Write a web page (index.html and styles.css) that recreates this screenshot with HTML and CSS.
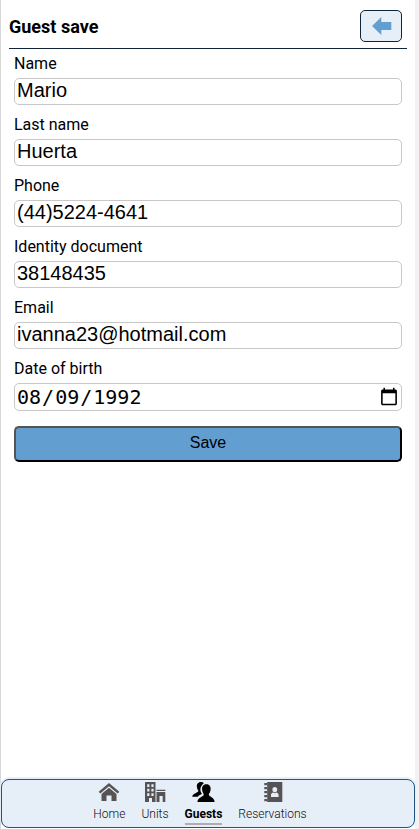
FILE: index.html
```html
<!DOCTYPE html>
<html lang="en">
<head>
<meta charset="utf-8">
<title>Guest save</title>
<link rel="stylesheet" href="styles.css">
</head>
<body>
<div class="app">
  <header class="header">
    <h1 class="title">Guest save</h1>
    <button class="back" aria-label="Back"><svg width="20" height="20" viewBox="0 0 20 20"><path d="M0 10 9.3 1V6H19.3V14H9.3V19Z"/></svg></button>
  </header>
  <form class="form">
    <label class="label" for="name">Name</label>
    <input class="input" id="name" type="text" value="Mario">
    <label class="label" for="last">Last name</label>
    <input class="input" id="last" type="text" value="Huerta">
    <label class="label" for="phone">Phone</label>
    <input class="input" id="phone" type="text" value="(44)5224-4641">
    <label class="label" for="doc">Identity document</label>
    <input class="input" id="doc" type="text" value="38148435">
    <label class="label" for="email">Email</label>
    <input class="input" id="email" type="text" value="ivanna23@hotmail.com">
    <label class="label" for="birth">Date of birth</label>
    <input class="input date" id="birth" type="date" value="1992-08-09">
    <button class="save" type="button">Save</button>
  </form>
  <nav class="nav">
    <a class="item"><svg width="22" height="20" viewBox="0 0 22 20"><path d="M11 1 .7 9.8 2.3 11.6 11 4.2 19.7 11.6 21.3 9.8Z"/><path d="M11 5.7 3.5 12V19H8.5V13.5H13.5V19H18.5V12Z"/></svg><span>Home</span></a>
    <a class="item"><svg width="22" height="20" viewBox="0 0 22 20"><path fill-rule="evenodd" d="M1 0H11.5V20H8V16H5V20H1ZM3.2 2.3V5H5.4V2.3ZM7.4 2.3V5H9.6V2.3ZM3.2 6.8V9.5H5.4V6.8ZM7.4 6.8V9.5H9.6V6.8ZM3.2 11.3V14H5.4V11.3ZM7.4 11.3V14H9.6V11.3Z"/><path d="M12.5 7.8H21.3V9H12.5ZM12.5 10H21.3V20H18.7V14H15.5V20H12.5Z"/></svg><span>Units</span></a>
    <a class="item active"><svg width="24" height="20" viewBox="0 0 24 20"><path d="M10 0C6.8 0 5.6 2.4 5.9 4.8 6.1 6.8 6.7 7.9 7.4 8.7 7.5 10.8 1.7 11 1.2 14.7H6.8C7.8 13.3 9.7 12.8 11 12.1 8.7 9 8.5 4.6 12.9 1.3 12.2.4 11.2 0 10 0Z"/><path d="M15.4 2.2C12 2.2 10.8 4.8 11.1 7.6 11.3 9.7 12 11.2 12.8 12.2 12.8 15 6.9 14.5 6.4 20H23.6C23.3 14.7 17.8 15 17.8 12.2 18.7 11.2 19.4 9.7 19.6 7.6 19.9 4.8 18.8 2.2 15.4 2.2Z"/></svg><span>Guests</span></a>
    <a class="item"><svg width="20" height="20" viewBox="0 0 20 20"><path fill-rule="evenodd" d="M4.2 0H19.3V20H4.2ZM11.8 5A2.4 2.6 0 1 0 11.8 10.2 2.4 2.6 0 1 0 11.8 5ZM8 15H15.6V13C15.6 11.4 14.3 10.6 13.2 10.5L11.8 11.3 10.4 10.5C9.2 10.6 8 11.4 8 13Z"/><path d="M1.3 1H4.3V3.2H1.3ZM1.3 5H4.3V7.2H1.3ZM1.3 9H4.3V11.2H1.3ZM1.3 13H4.3V15.2H1.3ZM1.3 17H4.3V19.2H1.3Z"/></svg><span>Reservations</span></a>
  </nav>
</div>
</body>
</html>
```
FILE: styles.css
```css
* { box-sizing: border-box; }
body {
  margin: 0;
  background: #f2f2f2;
  font-family: Roboto, sans-serif;
  color: #000;
}
.app {
  width: 415px;
  height: 829px;
  border-left: 1px solid #d8d8d8;
  background: #fff;
  display: flex;
  flex-direction: column;
}
.header {
  margin: 0 8px;
  height: 49px;
  padding: 4px 5px 0 0;
  border-bottom: 1px solid #10253a;
  display: flex;
  align-items: center;
  justify-content: space-between;
}
.title { margin: 0; font-size: 18px; font-weight: 700; }
.back {
  width: 42px;
  height: 32px;
  padding: 0 0 0 1px;
  border: 1px solid #10253a;
  border-radius: 5px;
  background: #e6eef8;
  display: flex;
  align-items: center;
  justify-content: center;
}
.back svg { fill: #629fd0; }
.form {
  flex: 1;
  padding: 5px 13px 0;
  display: flex;
  flex-direction: column;
}
.label { font-size: 16px; line-height: 19px; margin-bottom: 5px; }
.input {
  width: 100%;
  height: 27px;
  margin: 0 0 10px;
  padding: 0 2px 2px;
  border: 1px solid #c8c8c8;
  border-radius: 5px;
  background: #fff;
  font: 20px "Liberation Sans", sans-serif;
  color: #000;
}
.date { height: 28px; margin-bottom: 15px; padding: 1px 0 1px 1px; font-family: "DejaVu Sans Mono", monospace; }
.save {
  height: 36px;
  border: 2px outset #000;
  border-radius: 5px;
  background: #629fd0;
  font: 16px "Liberation Sans", sans-serif;
  color: #000;
  padding: 0 6px 2px;
}
.nav {
  height: 49px;
  margin-bottom: 1px;
  padding: 2px 16px 0 0;
  border: 1px solid #205583;
  border-radius: 8px;
  background: #e6eef8;
  box-shadow: 0 -1px 1px 1px #e6eef8;
  display: flex;
  justify-content: center;
  gap: 16px;
}
.item {
  height: 43px;
  display: flex;
  flex-direction: column;
  align-items: center;
  font-size: 12px;
  font-weight: 300;
  line-height: 14px;
  color: #111;
}
.item svg { fill: #565354; margin-bottom: 5px; }
.active { font-weight: 700; color: #000; border-bottom: 2px solid #b0adae; }
.active svg { fill: #000; }
```
